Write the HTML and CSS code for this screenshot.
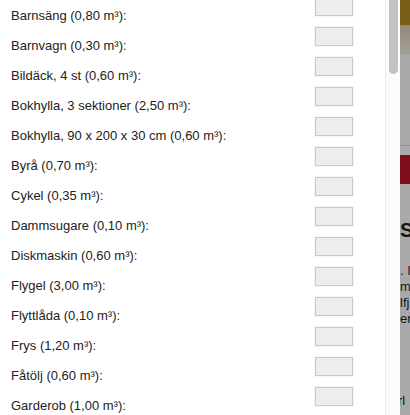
FILE: index.html
```html
<!DOCTYPE html>
<html lang="sv">
<head>
<meta charset="utf-8">
<title>Volym</title>
<link rel="stylesheet" href="styles.css">
</head>
<body>
<div class="panel">
  <div class="list">
    <label class="row"><span class="name">Barnsäng (0,80 m³):</span><input class="qty" type="text"></label>
    <label class="row"><span class="name">Barnvagn (0,30 m³):</span><input class="qty" type="text"></label>
    <label class="row"><span class="name">Bildäck, 4 st (0,60 m³):</span><input class="qty" type="text"></label>
    <label class="row"><span class="name">Bokhylla, 3 sektioner (2,50 m³):</span><input class="qty" type="text"></label>
    <label class="row"><span class="name">Bokhylla, 90 x 200 x 30 cm (0,60 m³):</span><input class="qty" type="text"></label>
    <label class="row"><span class="name">Byrå (0,70 m³):</span><input class="qty" type="text"></label>
    <label class="row"><span class="name">Cykel (0,35 m³):</span><input class="qty" type="text"></label>
    <label class="row"><span class="name">Dammsugare (0,10 m³):</span><input class="qty" type="text"></label>
    <label class="row"><span class="name">Diskmaskin (0,60 m³):</span><input class="qty" type="text"></label>
    <label class="row"><span class="name">Flygel (3,00 m³):</span><input class="qty" type="text"></label>
    <label class="row"><span class="name">Flyttlåda (0,10 m³):</span><input class="qty" type="text"></label>
    <label class="row"><span class="name">Frys (1,20 m³):</span><input class="qty" type="text"></label>
    <label class="row"><span class="name">Fåtölj (0,60 m³):</span><input class="qty" type="text"></label>
    <label class="row"><span class="name">Garderob (1,00 m³):</span><input class="qty" type="text"></label>
  </div>
</div>
<div class="scrollbar"><div class="thumb"></div></div>
<div class="backdrop">
  <div class="bd-gold"></div>
  <div class="bd-fade"></div>
  <div class="bd-gray bd-h1"></div>
  <div class="bd-line"></div>
  <div class="bd-gray bd-h2"></div>
  <div class="bd-red"></div>
  <div class="bd-text">
    <div class="bd-title">S</div>
    <div class="bd-p">.&nbsp;<span class="bd-dark">I</span></div>
    <div class="bd-p">m</div>
    <div class="bd-p">lfj</div>
    <div class="bd-p">er</div>
    <div class="bd-p bd-last">rl</div>
  </div>
</div>
</body>
</html>
```

FILE: styles.css
```css
html, body {
  margin: 0;
  padding: 0;
  height: 415px;
  overflow: hidden;
}
body {
  display: flex;
  width: 410px;
  font-family: "Liberation Sans", Arial, Helvetica, sans-serif;
  background: #a8a8a8;
}
.panel {
  width: 385px;
  height: 415px;
  flex: none;
  background: #ffffff;
  overflow: hidden;
}
.list {
  margin-top: -3px;
  padding: 0 32px 0 11px;
}
.row {
  display: flex;
  justify-content: space-between;
  align-items: flex-start;
  height: 30px;
}
.name {
  padding-top: 11px;
  font-size: 13px;
  line-height: 15px;
  color: #222222;
  white-space: nowrap;
}
.qty {
  box-sizing: border-box;
  width: 38px;
  height: 19px;
  margin: 0;
  padding: 0;
  border: 1px solid #c9c9c9;
  background: #ededed;
  box-shadow: 0 0 0 1px #f6f6f6;
  flex: none;
}
.scrollbar {
  width: 14px;
  height: 415px;
  flex: none;
  background: #fbfbfb;
  border-left: 1px solid #ececec;
  display: flex;
  justify-content: center;
}
.thumb {
  width: 9px;
  height: 74px;
  background: #c2c2c2;
  border-radius: 0 0 5px 5px;
}
.backdrop {
  width: 10px;
  flex: none;
  height: 415px;
  background: #a9a9a9;
  overflow: hidden;
  font-family: "Liberation Sans", Arial, sans-serif;
  color: #151515;
}
.bd-gold { height: 25px; background: #7a5d17; }
.bd-fade { height: 30px; background: linear-gradient(#938a7a, #a3a09c); }
.bd-h1 { height: 90px; }
.bd-line { height: 1px; background: #929292; }
.bd-h2 { height: 9px; }
.bd-red { height: 29px; background: #7f0f1d; }
.bd-text {
  padding-top: 35px;
  white-space: nowrap;
}
.bd-title {
  font-size: 20px;
  font-weight: bold;
  line-height: 22px;
  height: 44px;
}
.bd-p {
  font-size: 13px;
  line-height: 16px;
}
.bd-dark { color: #4a0d12; }
.bd-last {
  margin-top: 66px;
  margin-left: -2px;
}
```
